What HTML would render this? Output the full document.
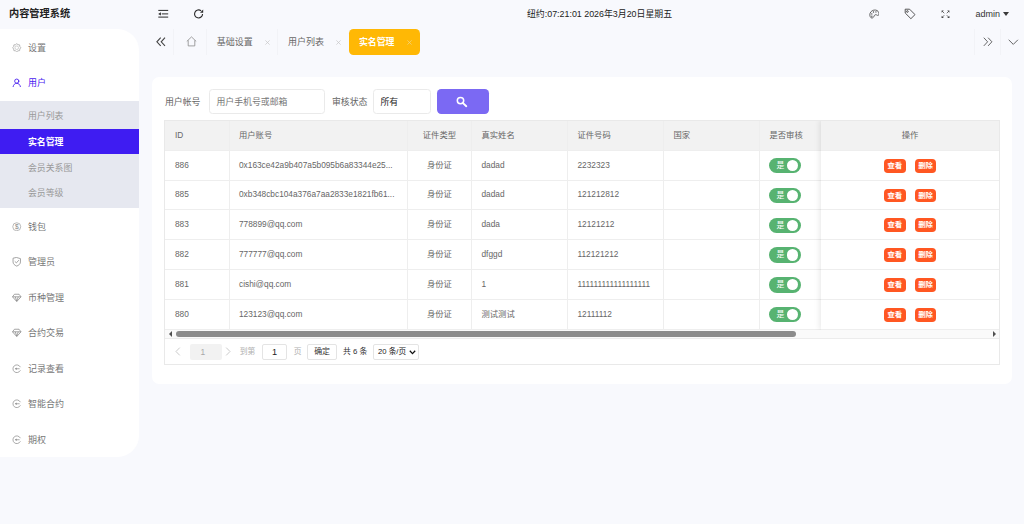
<!DOCTYPE html>
<html lang="zh-CN">
<head>
<meta charset="utf-8">
<title>内容管理系统</title>
<style>
*{box-sizing:border-box;margin:0;padding:0}
html,body{width:1024px;height:524px;overflow:hidden}
body{background:#f8f9fd;font-family:"Liberation Sans","Noto Sans CJK SC",sans-serif;font-size:9.2px;color:#555;position:relative}
.abs{position:absolute}
.logo{position:absolute;left:9px;top:5.5px;font-size:10.2px;font-weight:bold;color:#222;line-height:16px;white-space:nowrap}
.clock{position:absolute;left:527px;top:6.5px;font-size:8.9px;color:#222;line-height:15px;white-space:nowrap}
.admin{position:absolute;left:975.5px;top:6.8px;font-size:9px;color:#333;line-height:15px;white-space:nowrap}
.caret{position:absolute;left:1003.1px;top:11.6px;width:0;height:0;border-left:3.5px solid transparent;border-right:3.5px solid transparent;border-top:4px solid #3a3a3a}
.side{position:absolute;left:0;top:28.7px;width:139px;height:428.5px;background:#fff;border-radius:0 21.5px 21.5px 0;overflow:hidden}
.mi{position:absolute;left:28px;font-size:9px;color:#777;line-height:14px;white-space:nowrap}
.mi.on{color:#4a22f0}
.sub{position:absolute;left:0;top:72.2px;width:139px;height:106.9px;background:#e6e8f0}
.sub .cur{position:absolute;left:0;top:28.2px;width:139px;height:24.8px;background:#3f1cf2}
.sub span{position:absolute;left:28px;font-size:8.9px;color:#999;line-height:14px;white-space:nowrap}
.sub span.w{color:#fff;font-weight:bold}
.ico{position:absolute;left:12px;width:9.5px;height:9.5px}
.tab{position:absolute;top:34.2px;font-size:9px;color:#686868;line-height:16px;white-space:nowrap}
.tx{position:absolute;top:34px;font-size:9px;color:#c8c8c8;line-height:16px}
.tabon{position:absolute;left:349.2px;top:28.8px;width:70.8px;height:26px;background:#ffb805;border-radius:4.5px}
.vsep{position:absolute;top:28.5px;width:1px;height:26px;background:#f2f3f7}
.card{position:absolute;left:152px;top:76.9px;width:860.3px;height:306.9px;background:#fff;border-radius:7.2px}
.lbl{position:absolute;top:94.5px;font-size:8.9px;color:#666;line-height:14px;white-space:nowrap}
.inp{position:absolute;top:89px;height:25px;border:1px solid #eaeaea;border-radius:3.5px;background:#fff;font-size:8.9px;line-height:24.2px;padding-left:6.5px;color:#777;white-space:nowrap}
.btn{position:absolute;left:437px;top:89.2px;width:51.5px;height:24.9px;background:#7b69f3;border-radius:4.2px}
.tbl{position:absolute;left:164px;top:120px;width:836px;height:244.5px;background:#fff;overflow:hidden}
.tbl:after{content:"";position:absolute;left:0;top:0;right:0;bottom:0;border:1px solid #e9e9e9;pointer-events:none}
.thead{position:absolute;left:0;top:0;width:100%;height:30.5px;background:#f2f2f2}
.hl{position:absolute;left:0;width:100%;height:1px;background:#eeeeee}
.vl{position:absolute;top:0;width:1px;height:209.5px;background:#eeeeee}
.c{position:absolute;font-size:8.3px;color:#666;line-height:14px;white-space:nowrap}
.sw{position:absolute;left:605.2px;width:32px;height:15.5px;border-radius:8px;background:#57b371}
.sw i{position:absolute;right:2.8px;top:2.2px;width:11.2px;height:11.2px;border-radius:50%;background:#fff}
.sw b{position:absolute;left:7.2px;top:0;font-size:7.8px;line-height:15.3px;color:#fff;font-weight:normal}
.fix{position:absolute;left:656px;top:0;width:179.5px;height:209.5px;background:#fff;box-shadow:-1px 0 6px rgba(0,0,0,.10)}
.fix .fh{position:absolute;left:0;top:0;width:100%;height:30.5px;background:#f2f2f2}
.ob{position:absolute;width:21.7px;height:13.9px;border-radius:3.8px;background:#ff5722;color:#fff;font-size:7.4px;font-weight:bold;line-height:13.9px;text-align:center;white-space:nowrap}
.sbar{position:absolute;left:1px;top:209.5px;width:834px;height:9px;background:#fafafa;border-bottom:1px solid #ececec}
.thumb{position:absolute;left:11.4px;top:1.7px;width:619.8px;height:5.6px;border-radius:3px;background:#8c8c8c}
.al{position:absolute;left:4px;top:1.6px;width:0;height:0;border-top:3px solid transparent;border-bottom:3px solid transparent;border-right:3.4px solid #505050}
.ar{position:absolute;right:3.5px;top:1.6px;width:0;height:0;border-top:3px solid transparent;border-bottom:3px solid transparent;border-left:3.4px solid #505050}
.pg{position:absolute;left:0.5px;top:218.5px;width:100%;height:26px}
.pcur{position:absolute;left:25.8px;top:5.2px;width:31.8px;height:16px;background:#f2f2f2;border-radius:2px;font-size:8.4px;color:#a8a8a8;text-align:left;padding-left:10.3px;line-height:16px}
.pt{position:absolute;top:6.2px;font-size:7.8px;line-height:14px;white-space:nowrap}
.pin{position:absolute;top:5.2px;height:16px;border:1px solid #e4e4e4;border-radius:2px;background:#fff;font-size:7.9px;color:#222;line-height:14px;text-align:center;white-space:nowrap}

</style>
</head>
<body>

<div class="logo">内容管理系统</div>
<div class="clock">纽约:07:21:01 2026年3月20日星期五</div>
<div class="admin">admin</div><div class="caret"></div>
<svg class="abs" style="left:157px;top:8px" width="12" height="12" viewBox="0 0 12 12"><g stroke="#2b2b2b" stroke-width="1.0" fill="none"><path d="M1.3 2.4H11.2M4.8 5.9H11.2M1.3 9.1H11.2"/></g><path d="M1.2 5.9L3.9 4.3V7.5Z" fill="#2b2b2b"/></svg>
<svg class="abs" style="left:193px;top:8px" width="12" height="12" viewBox="0 0 12 12"><path d="M9.55 5.9A4 4 0 1 1 8.1 2.85" stroke="#2b2b2b" stroke-width="1.1" fill="none"/><path d="M10.2 1.5V4.7H7Z" fill="#2b2b2b"/></svg>
<svg class="abs" style="left:868.6px;top:9.1px" width="10.8" height="10.2" viewBox="0 0 12 11"><g fill="none" stroke="#444" stroke-width="0.9"><path d="M2.3 9.6C0.6 8.2 0.4 5.2 2 3.1C3.6 1 6.8 0.4 8.9 1.5C10.6 2.4 11.3 4.3 10.9 6.2C10.7 7 10 7.2 9.4 6.9C8.6 6.5 7.8 5.9 6.9 6.2C6 6.5 5.8 7.4 5.4 8.3C5 9.3 3.6 10.4 2.3 9.6Z"/></g><circle cx="3.1" cy="5.3" r="0.75" fill="#444"/><circle cx="5" cy="3.2" r="0.75" fill="#444"/><circle cx="7.7" cy="3.1" r="0.75" fill="#444"/><circle cx="3.2" cy="7.9" r="0.7" fill="#444"/></svg>
<svg class="abs" style="left:903.5px;top:8px" width="12" height="12" viewBox="0 0 12 12"><g fill="none" stroke="#444" stroke-width="0.9" stroke-linejoin="round"><path d="M1.2 1.2H5.6L11 6.6L6.9 10.7L1.2 5Z"/><circle cx="3.4" cy="3.5" r="0.85"/></g></svg>
<svg class="abs" style="left:940.8px;top:9.7px" width="9" height="9" viewBox="0 0 10 10"><g stroke="#444" stroke-width="0.85" fill="none"><path d="M1.2 1.2L3.6 3.6M8.8 1.2L6.4 3.6M1.2 8.2L3.6 5.8M8.8 8.2L6.4 5.8"/></g><g fill="#444"><path d="M0.7 0.6H3.1L0.7 3Z"/><path d="M9.3 0.6H6.9L9.3 3Z"/><path d="M0.7 8.8H3.1L0.7 6.4Z"/><path d="M9.3 8.8H6.9L9.3 6.4Z"/></g></svg>
<div class="side">
<svg class="ico" style="top:14.2px" viewBox="0 0 10 10"><g fill="none" stroke="#999" stroke-width="0.7"><circle cx="5" cy="5" r="1.9" stroke="#bbb"/><path d="M8.23 3.66Q10.30 5.00 8.23 6.34Q8.75 8.75 6.34 8.23Q5.00 10.30 3.66 8.23Q1.25 8.75 1.77 6.34Q-0.30 5.00 1.77 3.66Q1.25 1.25 3.66 1.77Q5.00 -0.30 6.34 1.77Q8.75 1.25 8.23 3.66Z" stroke-linejoin="round"/></g></svg>
<div class="mi" style="top:12.0px">设置</div>
<svg class="ico" style="top:49.2px" viewBox="0 0 10 10"><g fill="none" stroke="#4a22f0" stroke-width="0.95" stroke-linecap="round"><circle cx="5" cy="3.3" r="2.2"/><path d="M1.1 9.3C1.5 7 3 5.6 5 5.6C7 5.6 8.5 7 8.9 9.3"/></g></svg>
<div class="mi on" style="top:47.0px">用户</div>
<div class="sub"><div class="cur"></div>
<span style="top:8.6px">用户列表</span>
<span class="w" style="top:34.1px">实名管理</span>
<span style="top:59.8px">会员关系图</span>
<span style="top:84.8px">会员等级</span></div>
<svg class="ico" style="top:193.2px" viewBox="0 0 10 10"><circle cx="5" cy="5" r="4.2" fill="none" stroke="#999" stroke-width="0.7"/><text x="5" y="7.5" font-size="7" text-anchor="middle" fill="#888" font-family="Liberation Sans, sans-serif">$</text></svg>
<div class="mi" style="top:191.0px">钱包</div>
<svg class="ico" style="top:228.7px" viewBox="0 0 10 10"><g fill="none" stroke="#888" stroke-width="0.8" stroke-linejoin="round" stroke-linecap="round"><path d="M5 0.6L8.9 1.7V5.2C8.9 7.3 7.2 8.7 5 9.6C2.8 8.7 1.1 7.3 1.1 5.2V1.7Z"/><path d="M3.2 4.8L4.6 6.2L7 3.6"/></g></svg>
<div class="mi" style="top:226.5px">管理员</div>
<svg class="ico" style="top:264.2px" viewBox="0 0 10 10"><g fill="none" stroke="#888" stroke-width="0.8" stroke-linejoin="round"><path d="M2.6 1.3H7.4L9.5 4L5 9L0.5 4Z"/><path d="M0.5 4H9.5M3.4 4L5 8.6L6.6 4"/></g></svg>
<div class="mi" style="top:262.0px">币种管理</div>
<svg class="ico" style="top:299.7px" viewBox="0 0 10 10"><g fill="none" stroke="#888" stroke-width="0.8" stroke-linejoin="round"><path d="M2.6 1.3H7.4L9.5 4L5 9L0.5 4Z"/><path d="M0.5 4H9.5M3.4 4L5 8.6L6.6 4"/></g></svg>
<div class="mi" style="top:297.5px">合约交易</div>
<svg class="ico" style="top:335.2px" viewBox="0 0 10 10"><g fill="none" stroke="#888" stroke-width="0.75" stroke-linecap="round"><path d="M8.7 3A4.1 4.1 0 1 0 8.7 7"/><path d="M4 5H7.6"/></g><path d="M3.1 5L4.9 3.8V6.2Z" fill="#888"/></svg>
<div class="mi" style="top:333.0px">记录查看</div>
<svg class="ico" style="top:370.7px" viewBox="0 0 10 10"><g fill="none" stroke="#888" stroke-width="0.75" stroke-linecap="round"><path d="M8.7 3A4.1 4.1 0 1 0 8.7 7"/><path d="M4 5H7.6"/></g><path d="M3.1 5L4.9 3.8V6.2Z" fill="#888"/></svg>
<div class="mi" style="top:368.5px">智能合约</div>
<svg class="ico" style="top:406.2px" viewBox="0 0 10 10"><g fill="none" stroke="#888" stroke-width="0.75" stroke-linecap="round"><path d="M8.7 3A4.1 4.1 0 1 0 8.7 7"/><path d="M4 5H7.6"/></g><path d="M3.1 5L4.9 3.8V6.2Z" fill="#888"/></svg>
<div class="mi" style="top:404.0px">期权</div>
</div>
<div class="vsep" style="left:173px"></div>
<div class="vsep" style="left:206px"></div>
<div class="vsep" style="left:277px"></div>
<div class="vsep" style="left:974px"></div>
<div class="vsep" style="left:1000px"></div>
<svg class="abs" style="left:156.2px;top:37.1px" width="10" height="10" viewBox="0 0 10 10"><path d="M4.7 0.7L0.9 4.8L4.7 8.9M9 0.7L5.2 4.8L9 8.9" fill="none" stroke="#444" stroke-width="1.1"/></svg>
<svg class="abs" style="left:982.5px;top:37px" width="10" height="10" viewBox="0 0 10 10"><path d="M0.8 0.7L4.6 4.8L0.8 8.9M5.1 0.7L8.9 4.8L5.1 8.9" fill="none" stroke="#555" stroke-width="0.9"/></svg>
<svg class="abs" style="left:1007.5px;top:39px" width="11" height="7" viewBox="0 0 11 7"><path d="M0.7 0.8L5.3 5.4L9.9 0.8" fill="none" stroke="#555" stroke-width="0.9"/></svg>
<svg class="abs" style="left:186.2px;top:36.2px" width="11" height="11" viewBox="0 0 11 11"><path d="M0.8 5.4L5.5 0.9L10.2 5.4M2.2 4.3V9.9H8.8V4.3" fill="none" stroke="#8a8a8a" stroke-width="0.8" stroke-linejoin="round"/></svg>
<div class="tab" style="left:216.8px">基础设置</div><svg class="abs" style="left:265px;top:39.9px" width="5" height="5" viewBox="0 0 5 5"><path d="M0.4 0.4L4.6 4.6M4.6 0.4L0.4 4.6" stroke="#c6c6c6" stroke-width="0.7" fill="none"/></svg>
<div class="tab" style="left:288px">用户列表</div><svg class="abs" style="left:335.9px;top:39.9px" width="5" height="5" viewBox="0 0 5 5"><path d="M0.4 0.4L4.6 4.6M4.6 0.4L0.4 4.6" stroke="#c6c6c6" stroke-width="0.7" fill="none"/></svg>
<div class="tabon"></div>
<div class="tab" style="left:359px;color:#fff;font-weight:bold;font-size:8.85px">实名管理</div><svg class="abs" style="left:407.1px;top:39.9px" width="5" height="5" viewBox="0 0 5 5"><path d="M0.4 0.4L4.6 4.6M4.6 0.4L0.4 4.6" stroke="#f0d48a" stroke-width="0.7" fill="none"/></svg>
<div class="card"></div>
<div class="lbl" style="left:165px">用户帐号</div>
<div class="inp" style="left:209px;width:116px">用户手机号或邮箱</div>
<div class="lbl" style="left:332px">审核状态</div>
<div class="inp" style="left:373px;width:58px;color:#222">所有</div>
<div class="btn"><svg width="12" height="12" viewBox="0 0 12 12" style="position:absolute;left:19px;top:6.9px"><circle cx="4.5" cy="4.6" r="3.2" fill="none" stroke="#fff" stroke-width="1.5"/><path d="M7 7.1L10.3 10.2" stroke="#fff" stroke-width="1.9" stroke-linecap="round"/></svg></div>
<div class="tbl">
<div class="thead"></div>
<div class="hl" style="top:30.0px"></div>
<div class="hl" style="top:60.0px"></div>
<div class="hl" style="top:89.0px"></div>
<div class="hl" style="top:119.0px"></div>
<div class="hl" style="top:149.0px"></div>
<div class="hl" style="top:179.0px"></div>
<div class="hl" style="top:209.0px"></div>
<div class="vl" style="left:64.5px"></div>
<div class="vl" style="left:243.0px"></div>
<div class="vl" style="left:306.7px"></div>
<div class="vl" style="left:403.0px"></div>
<div class="vl" style="left:499.0px"></div>
<div class="vl" style="left:595.0px"></div>
<div class="c" style="left:11.0px;top:7.6px">ID</div>
<div class="c" style="left:75.0px;top:7.6px">用户账号</div>
<div class="c" style="left:275.4px;top:7.6px;transform:translateX(-50%)">证件类型</div>
<div class="c" style="left:317.5px;top:7.6px">真实姓名</div>
<div class="c" style="left:413.5px;top:7.6px">证件号码</div>
<div class="c" style="left:509.5px;top:7.6px">国家</div>
<div class="c" style="left:605.5px;top:7.6px">是否审核</div>
<div class="c" style="left:11.0px;top:37.6px">886</div>
<div class="c" style="left:75.0px;top:37.6px">0x163ce42a9b407a5b095b6a83344e25...</div>
<div class="c" style="left:275.4px;top:37.6px;transform:translateX(-50%)">身份证</div>
<div class="c" style="left:317.5px;top:37.6px">dadad</div>
<div class="c" style="left:413.5px;top:37.6px">2232323</div>
<div class="sw" style="top:37.9px"><b>是</b><i></i></div>
<div class="c" style="left:11.0px;top:67.4px">885</div>
<div class="c" style="left:75.0px;top:67.4px">0xb348cbc104a376a7aa2833e1821fb61...</div>
<div class="c" style="left:275.4px;top:67.4px;transform:translateX(-50%)">身份证</div>
<div class="c" style="left:317.5px;top:67.4px">dadad</div>
<div class="c" style="left:413.5px;top:67.4px">121212812</div>
<div class="sw" style="top:67.7px"><b>是</b><i></i></div>
<div class="c" style="left:11.0px;top:97.2px">883</div>
<div class="c" style="left:75.0px;top:97.2px">778899@qq.com</div>
<div class="c" style="left:275.4px;top:97.2px;transform:translateX(-50%)">身份证</div>
<div class="c" style="left:317.5px;top:97.2px">dada</div>
<div class="c" style="left:413.5px;top:97.2px">12121212</div>
<div class="sw" style="top:97.5px"><b>是</b><i></i></div>
<div class="c" style="left:11.0px;top:127.0px">882</div>
<div class="c" style="left:75.0px;top:127.0px">777777@qq.com</div>
<div class="c" style="left:275.4px;top:127.0px;transform:translateX(-50%)">身份证</div>
<div class="c" style="left:317.5px;top:127.0px">dfggd</div>
<div class="c" style="left:413.5px;top:127.0px">112121212</div>
<div class="sw" style="top:127.3px"><b>是</b><i></i></div>
<div class="c" style="left:11.0px;top:156.8px">881</div>
<div class="c" style="left:75.0px;top:156.8px">cishi@qq.com</div>
<div class="c" style="left:275.4px;top:156.8px;transform:translateX(-50%)">身份证</div>
<div class="c" style="left:317.5px;top:156.8px">1</div>
<div class="c" style="left:413.5px;top:156.8px">111111111111111111</div>
<div class="sw" style="top:157.1px"><b>是</b><i></i></div>
<div class="c" style="left:11.0px;top:186.6px">880</div>
<div class="c" style="left:75.0px;top:186.6px">123123@qq.com</div>
<div class="c" style="left:275.4px;top:186.6px;transform:translateX(-50%)">身份证</div>
<div class="c" style="left:317.5px;top:186.6px">测试测试</div>
<div class="c" style="left:413.5px;top:186.6px">12111112</div>
<div class="sw" style="top:186.9px"><b>是</b><i></i></div>
<div class="fix" style="left:656.5px"><div class="fh"></div>
<div class="hl" style="top:30.0px"></div>
<div class="hl" style="top:60.0px"></div>
<div class="hl" style="top:89.0px"></div>
<div class="hl" style="top:119.0px"></div>
<div class="hl" style="top:149.0px"></div>
<div class="hl" style="top:179.0px"></div>
<div class="hl" style="top:209.0px"></div>
<div class="c" style="left:89.5px;top:7.6px;transform:translateX(-50%)">操作</div>
<div class="ob" style="left:63.5px;top:38.7px">查看</div><div class="ob" style="left:94.2px;top:38.7px">删除</div>
<div class="ob" style="left:63.5px;top:68.5px">查看</div><div class="ob" style="left:94.2px;top:68.5px">删除</div>
<div class="ob" style="left:63.5px;top:98.3px">查看</div><div class="ob" style="left:94.2px;top:98.3px">删除</div>
<div class="ob" style="left:63.5px;top:128.1px">查看</div><div class="ob" style="left:94.2px;top:128.1px">删除</div>
<div class="ob" style="left:63.5px;top:157.9px">查看</div><div class="ob" style="left:94.2px;top:157.9px">删除</div>
<div class="ob" style="left:63.5px;top:187.7px">查看</div><div class="ob" style="left:94.2px;top:187.7px">删除</div>
</div>
<div class="sbar"><div class="thumb"></div><div class="al"></div><div class="ar"></div></div>
<div class="pg">
<svg class="abs" style="left:10.5px;top:8.5px" width="6" height="9" viewBox="0 0 6 9"><path d="M4.8 0.6L1 4.5L4.8 8.4" fill="none" stroke="#c4c4c4" stroke-width="0.9"/></svg>
<div class="pcur">1</div>
<svg class="abs" style="left:60px;top:8.5px" width="6" height="9" viewBox="0 0 6 9"><path d="M1.2 0.6L5 4.5L1.2 8.4" fill="none" stroke="#c4c4c4" stroke-width="0.9"/></svg>
<div class="pt" style="left:75.2px;color:#b0b0b0">到第</div>
<div class="pin" style="left:97.5px;width:25px;font-size:9.2px">1</div>
<div class="pt" style="left:129.3px;color:#b0b0b0">页</div>
<div class="pin" style="left:142.8px;width:29.5px;color:#333">确定</div>
<div class="pt" style="left:178.5px;color:#333">共 6 条</div>
<div class="pin" style="left:208.5px;width:46px;text-align:left;padding-left:4px;font-size:7.7px">20 条/页<svg class="abs" style="right:1.6px;top:5.2px" width="7" height="5" viewBox="0 0 7 5"><path d="M0.8 0.8L3.5 3.6L6.2 0.8" fill="none" stroke="#111" stroke-width="1.3"/></svg></div>
</div>
</div>
</body>
</html>
